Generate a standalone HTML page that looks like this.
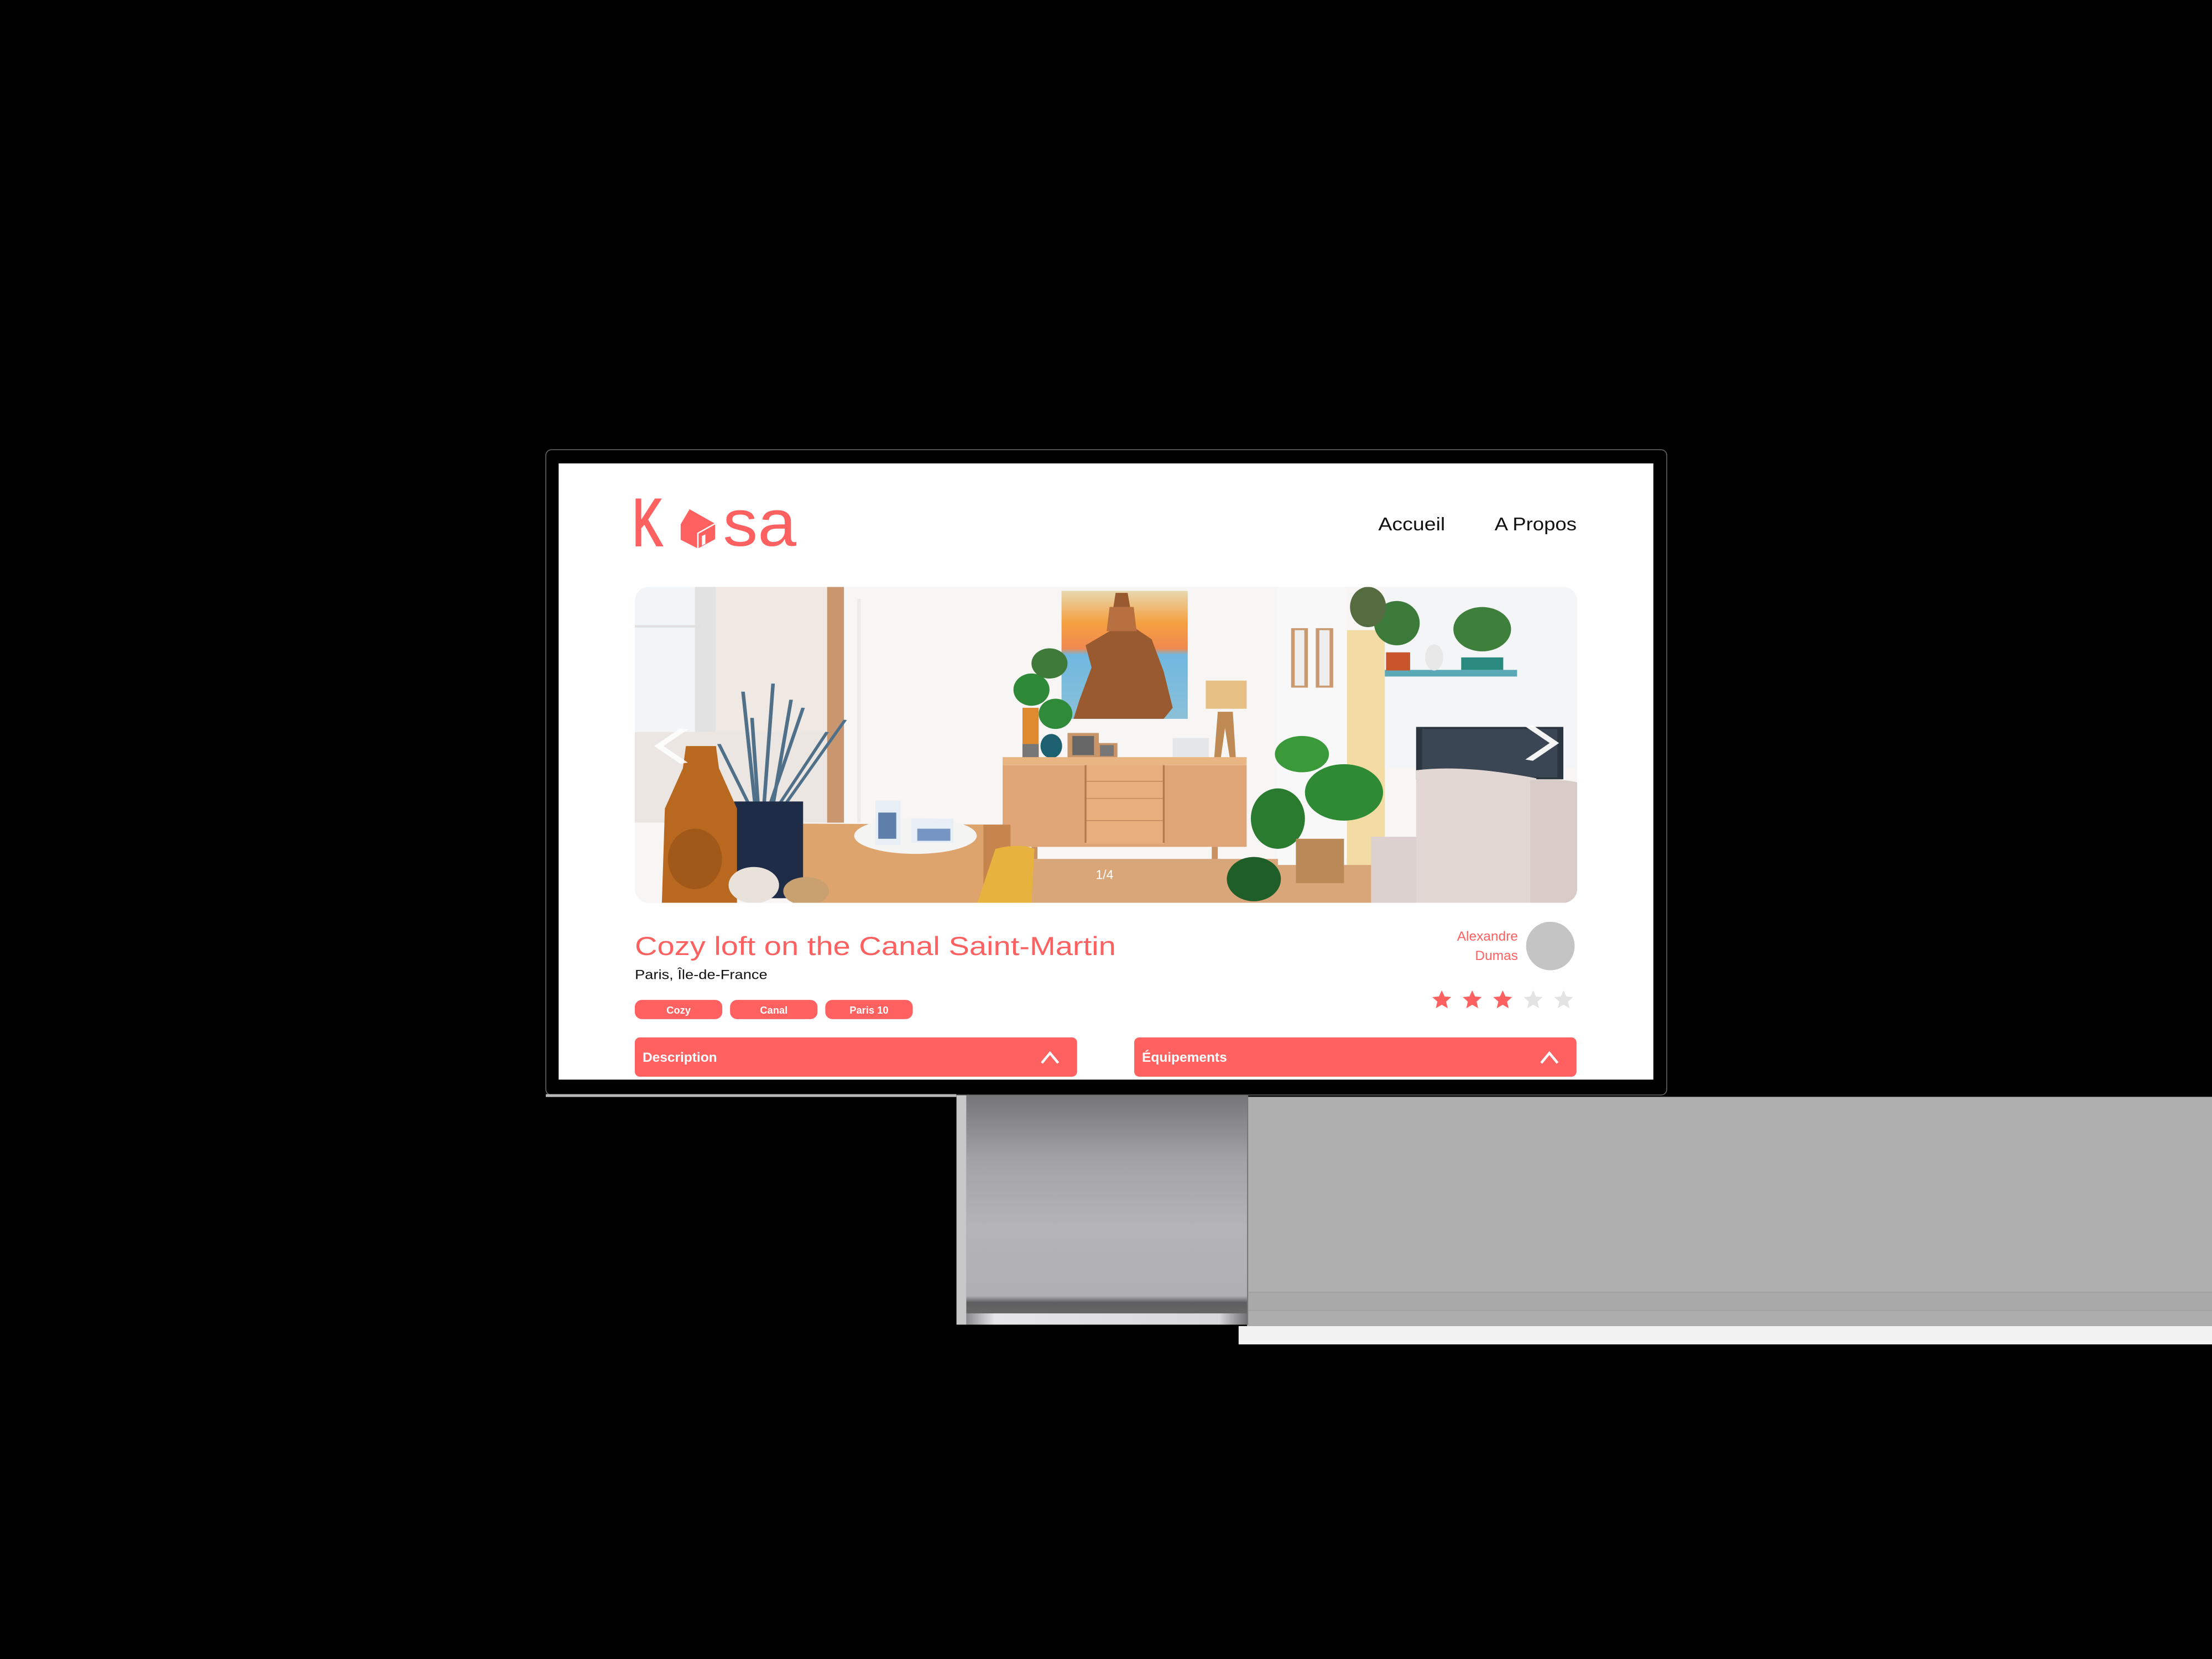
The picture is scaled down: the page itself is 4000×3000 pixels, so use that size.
<!DOCTYPE html>
<html><head><meta charset="utf-8">
<style>
html,body{margin:0;padding:0;background:#000;}
svg{display:block;}
text{font-family:"Liberation Sans","DejaVu Sans",sans-serif;}
</style></head>
<body>
<svg width="4000" height="3000" viewBox="0 0 1568 1176" xmlns="http://www.w3.org/2000/svg">
<defs>
  <linearGradient id="stand" x1="0" y1="0" x2="0" y2="1">
    <stop offset="0" stop-color="#767678"/>
    <stop offset="0.3" stop-color="#a3a3a5"/>
    <stop offset="0.6" stop-color="#b4b4b6"/>
    <stop offset="0.92" stop-color="#b0b0b2"/>
    <stop offset="0.95" stop-color="#5e5e60"/>
    <stop offset="1" stop-color="#666"/>
  </linearGradient>
  <linearGradient id="foot" x1="0" y1="0" x2="1" y2="0">
    <stop offset="0" stop-color="#8a8a8c"/>
    <stop offset="0.1" stop-color="#e6e6e8"/>
    <stop offset="0.9" stop-color="#d8d8da"/>
    <stop offset="1" stop-color="#707072"/>
  </linearGradient>
  <linearGradient id="paint" x1="0" y1="0" x2="0" y2="1">
    <stop offset="0" stop-color="#e8d8b0"/>
    <stop offset="0.25" stop-color="#f5a040"/>
    <stop offset="0.45" stop-color="#f08a50"/>
    <stop offset="0.5" stop-color="#70b8e0"/>
    <stop offset="1" stop-color="#8ac0d8"/>
  </linearGradient>
  <clipPath id="bannerClip"><rect x="450" y="416" width="668" height="224" rx="10"/></clipPath>
  <polygon id="star" points="0,-7 2,-2.6 6.7,-2.2 3.1,1 4.2,5.7 0,3.2 -4.2,5.7 -3.1,1 -6.7,-2.2 -2,-2.6" stroke-linejoin="round"/>
</defs>

<rect width="1568" height="1176" fill="#000"/>

<!-- gray block right -->
<rect x="884" y="777.5" width="684" height="138.5" fill="#afafaf"/>
<rect x="884" y="916" width="684" height="13" fill="#a9a9a9"/>
<rect x="884" y="929" width="684" height="11" fill="#adadae"/>
<rect x="878" y="940" width="690" height="13" fill="#f2f2f2"/>

<!-- stand -->
<rect x="678" y="776" width="7" height="163" fill="#c8c8c8"/>
<rect x="685" y="776" width="199" height="155" fill="url(#stand)"/>
<rect x="685" y="931" width="199" height="8" fill="url(#foot)"/>
<rect x="884" y="776" width="0.8" height="163" fill="#777"/>

<!-- monitor frame -->
<rect x="386.9" y="318.8" width="794.6" height="457.4" rx="4" fill="#000" stroke="#6a6a6a" stroke-width="0.6"/>
<rect x="386.9" y="775.6" width="291" height="2" fill="#b8b8b8"/>
<rect x="396" y="328.5" width="776" height="436.8" fill="#fff"/>

<!-- logo -->
<text x="448.5" y="386.5" font-size="47" fill="#FF6060" stroke="#FF6060" stroke-width="1.6" textLength="21" lengthAdjust="spacingAndGlyphs">K</text>
<polygon points="482.5,371.6 488.8,361 506.9,371.2 506.9,382.2 494.7,388.8 482.5,382.6" fill="#FF6060"/>
<polyline points="494.7,389 494.7,378 506.9,371.2" fill="none" stroke="#fff" stroke-width="1"/>
<polygon points="497.5,380 500,378.8 500,385.5 497.5,386.8" fill="#fff"/>
<text x="512.5" y="387" font-size="47" fill="#FF6060" textLength="52" lengthAdjust="spacingAndGlyphs">sa</text>

<!-- nav -->
<text x="977" y="376" font-size="13" fill="#111" textLength="47.4" lengthAdjust="spacingAndGlyphs">Accueil</text>
<text x="1059.5" y="376" font-size="13" fill="#111" textLength="58.1" lengthAdjust="spacingAndGlyphs">A Propos</text>

<!-- banner -->
<g clip-path="url(#bannerClip)">
<svg x="450" y="416" width="668" height="224" viewBox="0 0 1568 1568" preserveAspectRatio="none">
  <rect width="1568" height="1568" fill="#f7f6f5"/>
  <rect x="0" y="0" width="135" height="720" fill="#f2f5f8"/>
  <rect x="100" y="0" width="35" height="720" fill="#e2e2e2"/>
  <rect x="0" y="190" width="110" height="12" fill="#e0e0e0"/>
  <rect x="135" y="0" width="185" height="1170" fill="#efe8e3"/>
  <rect x="0" y="720" width="320" height="450" fill="#ebe6e2"/>
  <rect x="320" y="0" width="28" height="1170" fill="#c99670"/>
  <rect x="370" y="60" width="6" height="1110" fill="#ecebea"/>
  <rect x="710" y="20" width="210" height="635" fill="url(#paint)"/>
  <path d="M800 30 L820 30 L830 200 L860 260 L880 420 L895 600 L880 655 L730 655 L740 560 L760 400 L750 290 L790 220 Z" fill="#9a5a30"/>
  <path d="M790 100 L830 100 L835 220 L785 220 Z" fill="#b87040"/>
  <ellipse cx="660" cy="510" rx="30" ry="80" fill="#2e8a38"/>
  <ellipse cx="690" cy="380" rx="30" ry="75" fill="#3f7a3a"/>
  <ellipse cx="700" cy="630" rx="28" ry="75" fill="#2f8a3a"/>
  <rect x="645" y="600" width="27" height="250" fill="#e08a30"/>
  <rect x="645" y="780" width="27" height="70" fill="#777"/>
  <ellipse cx="693" cy="790" rx="18" ry="60" fill="#1d6070"/>
  <rect x="720" y="725" width="52" height="125" fill="#c8946a"/>
  <rect x="728" y="740" width="36" height="95" fill="#666"/>
  <rect x="768" y="775" width="35" height="75" fill="#c8946a"/>
  <rect x="774" y="785" width="23" height="55" fill="#777"/>
  <rect x="950" y="465" width="68" height="140" fill="#e6c084"/>
  <path d="M970 620 L995 620 L1000 850 L990 850 L982 700 L975 850 L964 850 Z" fill="#c08a55"/>
  <rect x="895" y="750" width="60" height="100" fill="#e4e6ea"/>
  <rect x="612" y="845" width="406" height="40" fill="#e9b583"/>
  <rect x="612" y="885" width="406" height="405" fill="#e0a577"/>
  <rect x="750" y="885" width="130" height="390" fill="#e8ae7e"/>
  <line x1="750" y1="885" x2="750" y2="1270" stroke="#b07a50" stroke-width="3"/>
  <line x1="880" y1="885" x2="880" y2="1270" stroke="#b07a50" stroke-width="3"/>
  <line x1="750" y1="965" x2="880" y2="965" stroke="#b07a50" stroke-width="3"/>
  <line x1="750" y1="1050" x2="880" y2="1050" stroke="#b07a50" stroke-width="3"/>
  <line x1="750" y1="1160" x2="880" y2="1160" stroke="#b07a50" stroke-width="3"/>
  <rect x="660" y="1290" width="10" height="100" fill="#c99060"/>
  <rect x="960" y="1290" width="10" height="100" fill="#c99060"/>
  <rect x="580" y="1350" width="720" height="218" fill="#d9a67a"/>
  <rect x="1070" y="0" width="115" height="1380" fill="#f8f8f8"/>
  <rect x="1092" y="205" width="28" height="295" fill="#c99a70"/>
  <rect x="1098" y="215" width="16" height="275" fill="#eee"/>
  <rect x="1133" y="205" width="29" height="295" fill="#c99a70"/>
  <rect x="1139" y="215" width="17" height="275" fill="#eee"/>
  <rect x="1185" y="215" width="63" height="1165" fill="#f3dca3"/>
  <rect x="1248" y="0" width="320" height="900" fill="#f4f5f6"/>
  <rect x="1248" y="412" width="220" height="33" fill="#5ba8b6"/>
  <ellipse cx="1268" cy="180" rx="38" ry="110" fill="#3c7a3a"/>
  <rect x="1250" y="325" width="40" height="90" fill="#c8552a"/>
  <ellipse cx="1410" cy="210" rx="48" ry="110" fill="#3e7f3c"/>
  <rect x="1375" y="350" width="70" height="62" fill="#2a8a80"/>
  <ellipse cx="1330" cy="350" rx="15" ry="65" fill="#e8e8e8"/>
  <ellipse cx="1220" cy="100" rx="30" ry="100" fill="#556b40"/>
  <rect x="1300" y="695" width="245" height="260" fill="#2b3540"/>
  <rect x="1310" y="705" width="225" height="240" fill="#3a4654"/>
  <rect x="1225" y="1240" width="343" height="328" fill="#ddd1cf"/>
  <path d="M1300 910 Q1380 880 1500 950 L1500 1568 L1300 1568 Z" fill="#e3d7d4"/>
  <path d="M1490 960 Q1540 950 1568 970 L1568 1568 L1490 1568 Z" fill="#d8cbc8"/>
  <ellipse cx="1110" cy="830" rx="45" ry="90" fill="#3a9a3a"/>
  <ellipse cx="1180" cy="1020" rx="65" ry="140" fill="#2f8a35"/>
  <ellipse cx="1070" cy="1150" rx="45" ry="150" fill="#2a7a30"/>
  <ellipse cx="1030" cy="1450" rx="45" ry="110" fill="#1f5e28"/>
  <rect x="1100" y="1250" width="80" height="220" fill="#b98a58"/>
  <path d="M280 1175 L625 1180 L625 1568 L280 1568 Z" fill="#dea46d"/>
  <rect x="580" y="1180" width="45" height="330" fill="#c7854e"/>
  <ellipse cx="467" cy="1235" rx="102" ry="90" fill="#f4f4f2"/>
  <rect x="400" y="1060" width="42" height="220" fill="#e8eef6"/>
  <rect x="405" y="1120" width="30" height="130" fill="#24508a" opacity="0.7"/>
  <rect x="460" y="1150" width="70" height="120" fill="#e8eef6"/>
  <rect x="470" y="1200" width="55" height="60" fill="#2a5aa0" opacity="0.6"/>
  <path d="M570 1568 L600 1300 Q640 1270 665 1300 L660 1568 Z" fill="#e8b23e"/>
  <g stroke="#4f7088" stroke-width="6" fill="none">
    <path d="M200 1080 L180 520"/><path d="M215 1080 L230 480"/><path d="M230 1080 L260 560"/>
    <path d="M240 1080 L320 720"/><path d="M250 1080 L350 660"/><path d="M190 1080 L140 780"/>
    <path d="M205 1080 L195 650"/><path d="M225 1080 L280 600"/>
  </g>
  <rect x="165" y="1065" width="115" height="480" fill="#1f2c48"/>
  <path d="M85 790 L135 790 L140 900 L170 1100 L170 1568 L45 1568 L50 1100 L80 900 Z" fill="#b8691f"/>
  <ellipse cx="100" cy="1350" rx="45" ry="150" fill="#8a4a15" opacity="0.5"/>
  <ellipse cx="198" cy="1480" rx="42" ry="90" fill="#e8e2da"/>
  <ellipse cx="285" cy="1510" rx="38" ry="70" fill="#c9a070"/>
  <polyline points="82,705 40,790 82,875" fill="none" stroke="#fff" stroke-width="14" opacity="0.85"/>
  <polyline points="1488,690 1530,775 1488,860" fill="none" stroke="#fff" stroke-width="14" opacity="0.95"/>
</svg>
</g>
<text x="783" y="623" font-size="9" fill="#fff" text-anchor="middle">1/4</text>

<text x="450" y="677" font-size="18.5" fill="#FF6060" textLength="341" lengthAdjust="spacingAndGlyphs">Cozy loft on the Canal Saint-Martin</text>
<text x="450" y="694" font-size="9.6" fill="#111" textLength="94" lengthAdjust="spacingAndGlyphs">Paris, Île-de-France</text>

<rect x="450" y="708.8" width="62" height="13.6" rx="5" fill="#FF6060"/>
<rect x="517.5" y="708.8" width="62" height="13.6" rx="5" fill="#FF6060"/>
<rect x="585" y="708.8" width="62" height="13.6" rx="5" fill="#FF6060"/>
<text x="481" y="718.6" font-size="7.2" font-weight="bold" fill="#fff" text-anchor="middle">Cozy</text>
<text x="548.5" y="718.6" font-size="7.2" font-weight="bold" fill="#fff" text-anchor="middle">Canal</text>
<text x="616" y="718.6" font-size="7.2" font-weight="bold" fill="#fff" text-anchor="middle">Paris 10</text>

<text x="1076" y="666.8" font-size="9.6" fill="#FF6060" text-anchor="end">Alexandre</text>
<text x="1076" y="680.6" font-size="9.6" fill="#FF6060" text-anchor="end">Dumas</text>
<circle cx="1099" cy="670.6" r="17.2" fill="#c4c4c4"/>

<use href="#star" x="1022" y="709" fill="#FF6060"/>
<use href="#star" x="1043.6" y="709" fill="#FF6060"/>
<use href="#star" x="1065.2" y="709" fill="#FF6060"/>
<use href="#star" x="1086.8" y="709" fill="#E3E3E3"/>
<use href="#star" x="1108.4" y="709" fill="#E3E3E3"/>

<rect x="450" y="735.4" width="313.5" height="27.8" rx="3.5" fill="#FF6060"/>
<rect x="804" y="735.4" width="313.5" height="27.8" rx="3.5" fill="#FF6060"/>
<text x="455.5" y="752.6" font-size="9.6" font-weight="bold" fill="#fff">Description</text>
<text x="809.5" y="752.6" font-size="9.6" font-weight="bold" fill="#fff">Équipements</text>
<polyline points="738.5,753.5 744.3,746.5 750.1,753.5" fill="none" stroke="#fff" stroke-width="1.8"/>
<polyline points="1092.5,753.5 1098.3,746.5 1104.1,753.5" fill="none" stroke="#fff" stroke-width="1.8"/>
</svg>
</body></html>
